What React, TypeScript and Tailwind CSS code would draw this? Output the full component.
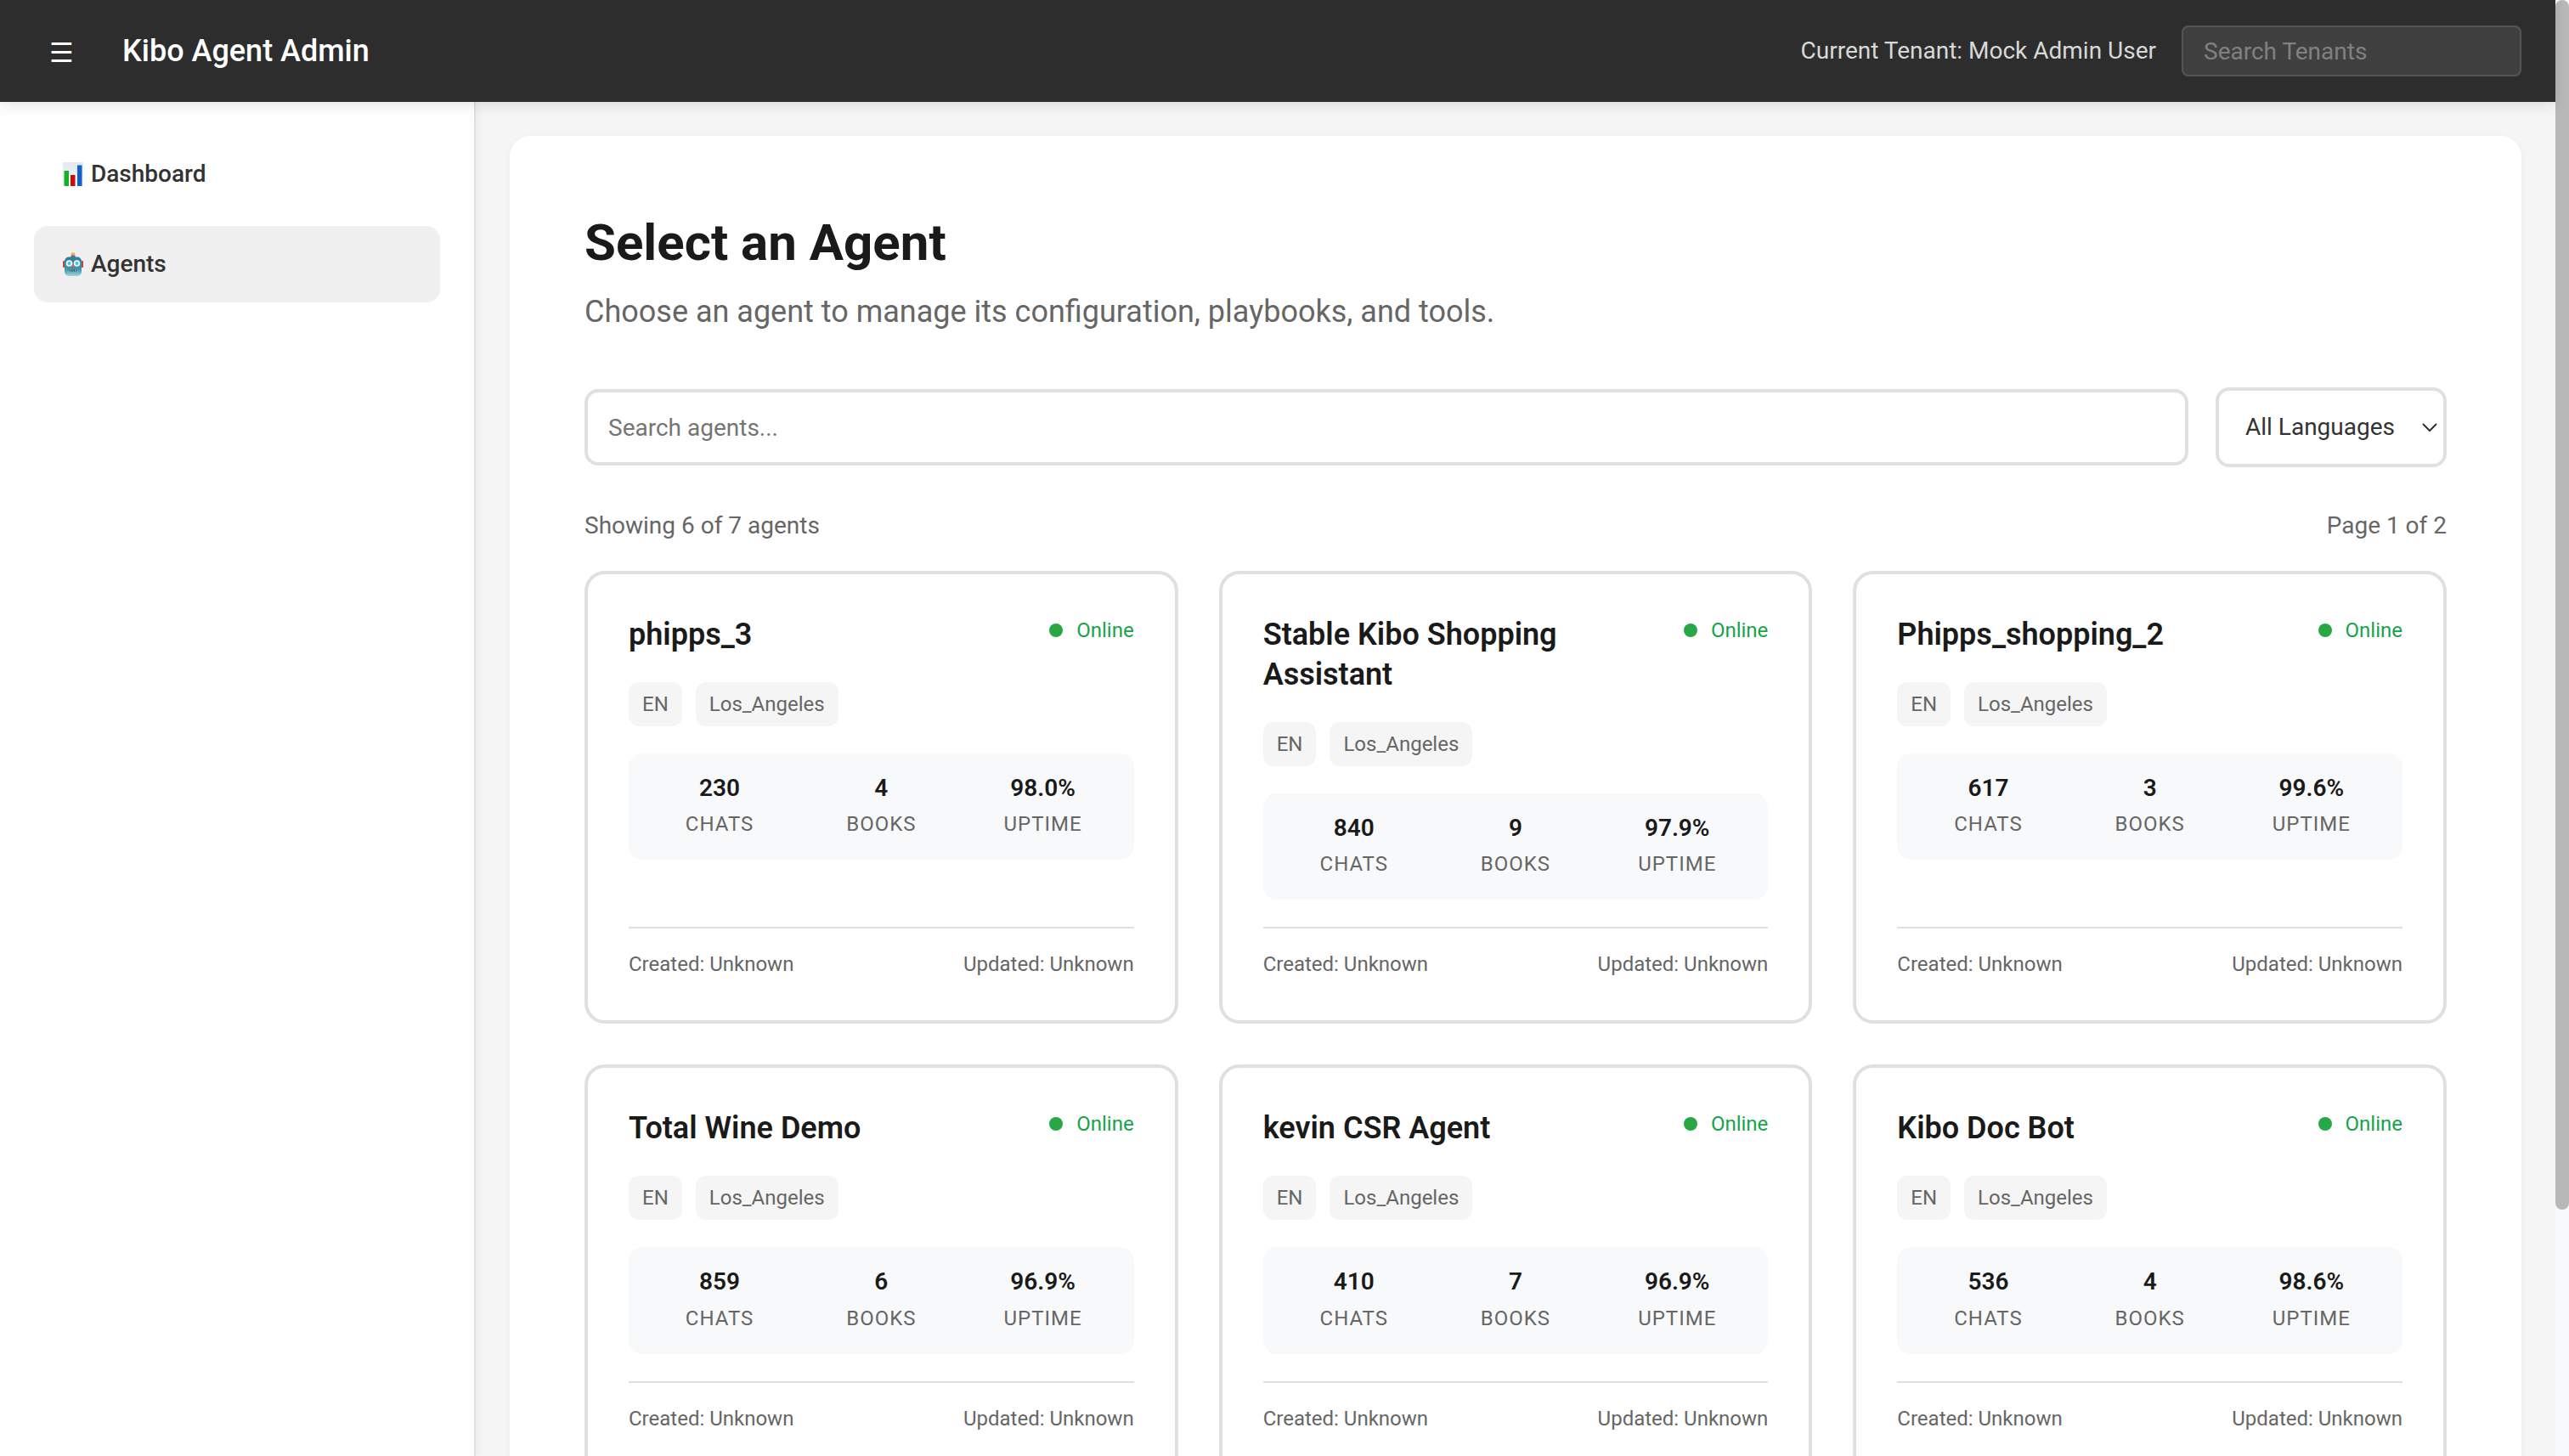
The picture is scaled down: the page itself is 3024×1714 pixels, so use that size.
const agents = [
  { name: "phipps_3", chats: 230, books: 4, uptime: "98.0%" },
  { name: "Stable Kibo Shopping Assistant", chats: 840, books: 9, uptime: "97.9%" },
  { name: "Phipps_shopping_2", chats: 617, books: 3, uptime: "99.6%" },
  { name: "Total Wine Demo", chats: 859, books: 6, uptime: "96.9%" },
  { name: "kevin CSR Agent", chats: 410, books: 7, uptime: "96.9%" },
  { name: "Kibo Doc Bot", chats: 536, books: 4, uptime: "98.6%" },
];

function ChartEmoji() {
  return (
    <svg width="24" height="28" viewBox="0 0 24 28" className="ml-[2px] shrink-0">
      <defs>
        <linearGradient id="chartBg" x1="0" y1="0" x2="0" y2="1">
          <stop offset="0" stopColor="#e3e9f0" />
          <stop offset="1" stopColor="#f4f6f8" />
        </linearGradient>
      </defs>
      <rect x="0" y="0" width="24" height="28" fill="url(#chartBg)" />
      <rect x="1.5" y="10" width="5.5" height="18" fill="#14b326" />
      <rect x="9" y="15" width="5.5" height="13" fill="#c90d0d" />
      <rect x="17" y="3.5" width="5.5" height="24.5" fill="#0f5fd0" />
    </svg>
  );
}

function RobotEmoji() {
  return (
    <svg width="24" height="28" viewBox="0 0 24 28" className="ml-[2px] shrink-0">
      <defs>
        <linearGradient id="robotFace" x1="0" y1="0" x2="0" y2="1">
          <stop offset="0" stopColor="#2f7f96" />
          <stop offset="0.65" stopColor="#3f97a8" />
          <stop offset="1" stopColor="#a8d4dc" />
        </linearGradient>
      </defs>
      <rect x="0" y="10" width="3" height="8" rx="1" fill="#c8443a" />
      <rect x="21" y="10" width="3" height="8" rx="1" fill="#c8443a" />
      <circle cx="12" cy="2.2" r="2.2" fill="#f2b233" />
      <rect x="9.5" y="3.5" width="5" height="2.5" fill="#7f5aa8" />
      <rect x="2" y="5.5" width="20" height="22.5" rx="5" fill="url(#robotFace)" />
      <circle cx="7.5" cy="13" r="3.8" fill="#eefafd" />
      <circle cx="16.5" cy="13" r="3.8" fill="#eefafd" />
      <circle cx="7.5" cy="13" r="2" fill="#3fc2e6" />
      <circle cx="16.5" cy="13" r="2" fill="#3fc2e6" />
      <path d="M12 13.5l2 3.5h-4z" fill="#e8604c" />
      <rect x="8" y="20" width="8" height="2.5" rx="1" fill="#27505c" />
      <path d="M9.5 20v2.5M12 20v2.5M14.5 20v2.5" stroke="#cfe3e8" strokeWidth="0.7" />
    </svg>
  );
}

function AgentCard({ agent }: { agent: (typeof agents)[number] }) {
  return (
    <div className="flex flex-col rounded-[24px] border-4 border-[#e0e0e0] bg-white p-12">
      <div className="mb-8 flex items-start justify-between gap-8">
        <h3 className="text-[36px] leading-[1.3] font-semibold text-[#1a1a1a]">{agent.name}</h3>
        <div className="flex shrink-0 items-center gap-4 text-[24px] leading-[36px] text-[#16a34a]">
          <span className="h-4 w-4 rounded-full bg-[#28a745]"></span>
          Online
        </div>
      </div>
      <div className="mb-8 flex gap-4 text-[24px] leading-[36px] text-[#666666]">
        <span className="rounded-[12px] bg-[#f5f5f5] px-4 py-2">EN</span>
        <span className="rounded-[12px] bg-[#f5f5f5] px-4 py-2">Los_Angeles</span>
      </div>
      <div className="mb-8 grid grid-cols-3 gap-6 rounded-[16px] bg-[#f8f9fa] p-6 text-center">
        <Stat value={agent.chats} label="CHATS" />
        <Stat value={agent.books} label="BOOKS" />
        <Stat value={agent.uptime} label="UPTIME" />
      </div>
      <div className="mt-auto flex justify-between border-t-2 border-[#e0e0e0] pt-6 text-[24px] leading-[36px] text-[#666666]">
        <span>Created: Unknown</span>
        <span>Updated: Unknown</span>
      </div>
    </div>
  );
}

function Stat({ value, label }: { value: string | number; label: string }) {
  return (
    <div>
      <div className="mb-2 text-[28px] leading-[1.2] font-semibold text-[#1a1a1a]">{value}</div>
      <div className="text-[24px] leading-[36px] tracking-[1px] text-[#666666]">{label}</div>
    </div>
  );
}

export default function App() {
  return (
    <div className="flex h-[1714px] w-[3024px] overflow-hidden bg-[#f5f5f5] font-['Roboto',sans-serif]">
      <div className="flex min-w-0 flex-1 flex-col">
        <header className="z-10 flex h-[120px] shrink-0 items-center justify-between bg-[#2d2d2d] pr-10 pl-[58px] shadow-[0_4px_16px_rgba(0,0,0,0.1)]">
          <div className="flex items-center gap-[57px]">
            <span className="mt-[3px] text-[32px] leading-none text-white">☰</span>
            <h1 className="text-[36px] leading-[54px] font-medium text-white">Kibo Agent Admin</h1>
          </div>
          <div className="flex items-center gap-[30px]">
            <span className="text-[28px] text-[#d8d8d8]">Current Tenant: Mock Admin User</span>
            <input
              className="h-[60px] w-[400px] rounded-[8px] border-2 border-[#555555] bg-[#404040] px-6 text-[28px] placeholder:text-[#808080]"
              placeholder="Search Tenants"
            />
          </div>
        </header>
        <div className="flex min-h-0 flex-1">
          <aside className="flex w-[560px] shrink-0 flex-col gap-4 border-r-2 border-[#e0e0e0] bg-white p-10 shadow-[2px_0_8px_rgba(0,0,0,0.05)]">
            <div className="flex h-[90px] items-center gap-[9px] rounded-[16px] px-8 text-[28px] font-medium text-[#333333]">
              <ChartEmoji />
              Dashboard
            </div>
            <div className="flex h-[90px] items-center gap-[9px] rounded-[16px] bg-[#f0f0f0] px-8 text-[28px] font-medium text-[#333333]">
              <RobotEmoji />
              Agents
            </div>
          </aside>
          <main className="min-w-0 flex-1 p-10">
            <div className="rounded-[24px] bg-white p-[88px] shadow-[0_2px_8px_rgba(0,0,0,0.05)]">
              <h2 className="mb-4 text-[60px] leading-[76px] font-bold text-[#1a1a1a]">Select an Agent</h2>
              <p className="mb-[62px] text-[36px] leading-[54px] text-[#666666]">
                Choose an agent to manage its configuration, playbooks, and tools.
              </p>
              <div className="mb-12 flex items-center gap-8">
                <input
                  className="h-[90px] min-w-0 flex-1 rounded-[16px] border-4 border-[#e0e0e0] px-6 text-[28px] placeholder:text-[#757575]"
                  placeholder="Search agents..."
                />
                <div className="flex h-[94px] w-[272px] items-center justify-between rounded-[16px] border-4 border-[#e0e0e0] pr-[6px] pl-[31px] text-[28px] text-[#333333]">
                  All Languages
                  <svg width="20" height="12" viewBox="0 0 20 12" fill="none" stroke="#333333" strokeWidth="2">
                    <path d="M2 2l8 8 8-8" />
                  </svg>
                </div>
              </div>
              <div className="mb-8 flex justify-between text-[28px] leading-[42px] text-[#666666]">
                <span>Showing 6 of 7 agents</span>
                <span>Page 1 of 2</span>
              </div>
              <div className="grid grid-cols-3 gap-12">
                {agents.map((a) => (
                  <AgentCard key={a.name} agent={a} />
                ))}
              </div>
            </div>
          </main>
        </div>
      </div>
      <div className="w-4 shrink-0 bg-[#f8f9fb]">
        <div className="h-[1424px] rounded-[8px] bg-[#b8b8b8]"></div>
      </div>
    </div>
  );
}
